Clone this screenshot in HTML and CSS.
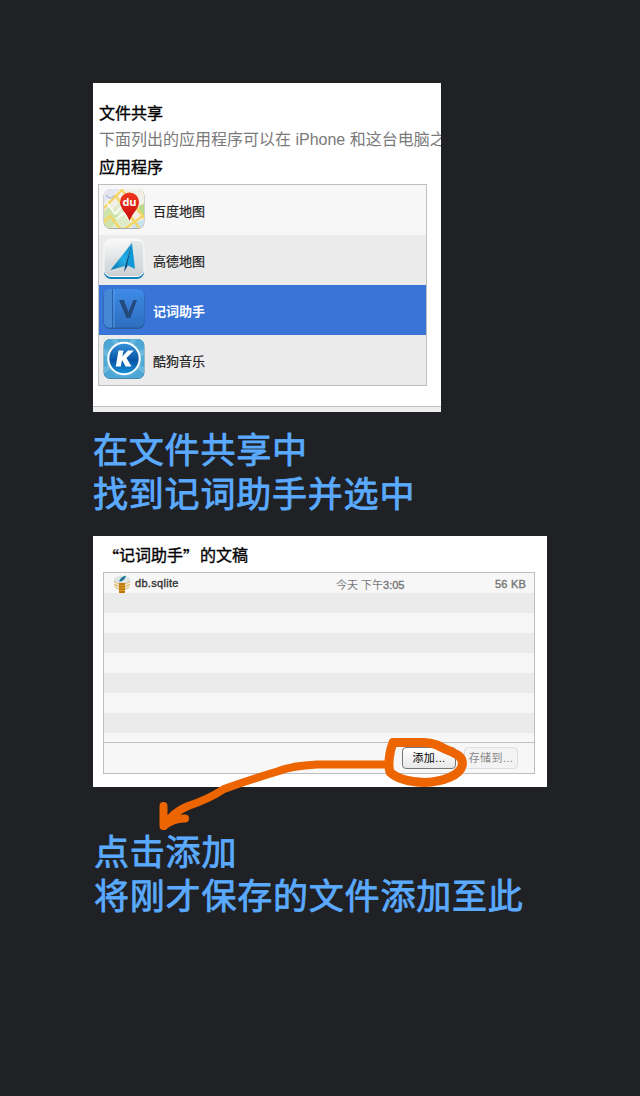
FILE: index.html
```html
<!DOCTYPE html>
<html lang="zh-CN">
<head>
<meta charset="utf-8">
<title>文件共享</title>
<link rel="stylesheet" href="styles.css">
</head>
<body>
<main class="page">
  <section class="panel apps-panel">
    <h2 class="heading">文件共享</h2>
    <p class="description">下面列出的应用程序可以在 iPhone 和这台电脑之</p>
    <h2 class="heading">应用程序</h2>
    <ul class="app-list">
      <li class="app">
        <svg class="app-icon" viewBox="0 0 42 42">
          <defs><clipPath id="r1"><rect x="1" y="1" width="40" height="39" rx="6"/></clipPath>
          <linearGradient id="pin" x2="0" y2="1"><stop stop-color="#f23a20"/><stop offset="1" stop-color="#c40808"/></linearGradient></defs>
          <rect x="0.5" y="1" width="41" height="40" rx="7" fill="#aaa"/>
          <g clip-path="url(#r1)">
            <rect width="42" height="42" fill="#f2f0e6"/>
            <path d="M0 0h17L0 16z" fill="#e3e5f1"/><path d="M1 30L17 14l16 20-9 8H8z" fill="#e0ecc9"/>
            <path d="M0 24l7-6 9 11-8 11H0z" fill="#cfe4aa"/>
            <path d="M30 36l12-5v11H28z" fill="#c8e3ed"/><path d="M36 18l6-3v14l-8-5z" fill="#b9da87"/>
            <path d="M-1 22L19 2l24 30M12 7l25 34M-1 36l8-8 13 16M20 42l20-14" fill="none" stroke="#f5d565" stroke-width="2.4"/>
            <path d="M4 15l8 11 8-9M13 31l8-6 7 9" fill="none" stroke="#fff" stroke-width="1.5"/>
            <path d="M3 7q5 6 8 0" fill="none" stroke="#b2bbd2" stroke-width="1.3"/>
          </g>
          <path d="M26.500 33C24 25 17 21 17 14a9.500 9.500 0 0 1 19 0c0 7-7 11-9.500 19z" fill="url(#pin)"/>
          <text x="26.500" y="18" text-anchor="middle" class="pin-label">du</text>
        </svg>
        <span>百度地图</span>
      </li>
      <li class="app">
        <svg class="app-icon" viewBox="0 0 42 42">
          <defs><linearGradient id="silver" x2="0" y2="1"><stop stop-color="#fafafa"/><stop offset="1" stop-color="#c9d0d2"/></linearGradient>
          <linearGradient id="arrow" x1="1" x2="0" y2="1"><stop stop-color="#0786c7"/><stop offset=".5" stop-color="#25b0e8"/><stop offset="1" stop-color="#0872ad"/></linearGradient></defs>
          <rect x="1" y="3" width="40" height="38" rx="7" fill="#1482bd"/>
          <rect x="1" y="1" width="40" height="37.500" rx="7" fill="url(#silver)" stroke="#f8f8f8"/>
          <path d="M2 24q18 0 25-21h8q5 0 5 6v18L2 35z" fill="#d4dadb" opacity=".55"/>
          <path d="M29 5L7.500 32 22 28z" fill="url(#arrow)"/><path d="M29 5l-7 23-1 6 4-7z" fill="#064e80"/><path d="M29 5l3 26-8-4z" fill="#1099d6"/>
        </svg>
        <span>高德地图</span>
      </li>
      <li class="app selected">
        <svg class="app-icon" viewBox="0 0 42 42">
          <defs><linearGradient id="book" x2="0" y2="1"><stop stop-color="#3e8be6"/><stop offset="1" stop-color="#2d6ebf"/></linearGradient></defs>
          <rect x=".5" y="1.500" width="41" height="39.500" rx="6.500" fill="#285b9c"/>
          <rect x="1" y="1" width="40" height="38.500" rx="6" fill="url(#book)"/>
          <path d="M7 1h2v38.500H7q-6 0-6-6V7q0-6 6-6z" fill="#4688d3"/>
          <path d="M9.500 1v38.500" class="spine"/><path d="M11 1v38.500" stroke="#5ba2ef" stroke-width=".8"/>
          <path d="M16 12h4.800l4.700 12 4.800-12H34L27.300 30h-3.800z" fill="#24497c"/>
        </svg>
        <span>记词助手</span>
      </li>
      <li class="app">
        <svg class="app-icon" viewBox="0 0 42 42">
          <defs><radialGradient id="kbg"><stop stop-color="#a5e0f7"/><stop offset="1" stop-color="#4ca7d4"/></radialGradient>
          <linearGradient id="kdisc" x2="0" y2="1"><stop stop-color="#3995dc"/><stop offset=".55" stop-color="#0754a5"/><stop offset="1" stop-color="#1693da"/></linearGradient></defs>
          <rect x=".5" y="1" width="41" height="40" rx="6.500" fill="#4389ac"/>
          <rect x="1" y="1" width="40" height="39" rx="6" fill="url(#kbg)"/>
          <path d="M21 20L8 1h6zM21 20L1 11v7zM21 20l20-9v7zM21 20L28 1h6zM21 20L1 29v7zM21 20l20 9v7z" fill="#c0e9f7" opacity=".25"/>
          <circle cx="21" cy="20.500" r="15.700" fill="url(#kdisc)" stroke="#fff" stroke-width="2"/>
          <path d="M15.500 12.500h5l-1.200 6 5.700-6h5.800L23.500 20l5 8.500h-5.800L19 22l-1.200 6.500h-5z" fill="#fff"/>
        </svg>
        <span>酷狗音乐</span>
      </li>
    </ul>
    <div class="panel-edge"></div>
  </section>

  <p class="caption">在文件共享中<br>找到记词助手并选中</p>

  <section class="panel docs-panel">
    <h2 class="heading docs-title"><span class="open-quote">“</span>记词助手<span class="close-quote">”</span>的文稿</h2>
    <div class="documents">
      <div class="file-list">
        <div class="file">
          <svg class="file-icon" viewBox="0 0 18 18">
            <path d="M1 4v8q3 3 8 3t8-3V4z" fill="#dcc491"/><ellipse cx="9" cy="4.500" rx="8" ry="3.800" fill="#dfe5e7"/>
            <path d="M1 8q8 4 16 0M1 11q8 4 16 0" fill="none" stroke="#fff6df" stroke-width="1"/>
            <path d="M6 8h6v10H6z" fill="#bd780c"/><path d="M6 10.500h6M6 13h6M6 15.500h6" stroke="#e3ac3b" stroke-width=".8"/>
            <path d="M6 6.500q1-4.500 7-6-1 4.500-5 6z" fill="#237895"/>
          </svg>
          <span class="file-name">db.sqlite</span>
          <span class="file-date">今天 下午<b>3:05</b></span>
          <span class="file-size">56 KB</span>
        </div>
      </div>
      <div class="toolbar">
        <button class="button">添加...</button>
        <button class="button" disabled>存储到...</button>
      </div>
    </div>
  </section>

  <p class="caption caption-last">点击添加<br>将刚才保存的文件添加至此</p>

  <svg class="annotation" viewBox="0 0 640 1096">
    <path class="ring" d="M393 743C389 752 388 766 390 772C397 779 412 782 425 782.500C443 782 460 775 462 766C465 754 451 753 437 745Q429 742 422 742.500H393"/>
    <path d="M389 764.500H317Q291 766 279 771Q252 779 224 789Q207 800 188 806Q173 812 164 826M163.500 806V826Q174 818 185 818.500"/>
  </svg>
</main>
</body>
</html>
```
FILE: styles.css
```css
* { box-sizing: border-box; }
body {
  margin: 0;
  background: #202124;
  font-family: "Liberation Sans", "Noto Sans CJK SC", sans-serif;
}
.page {
  position: relative;
  height: 1096px;
  padding: 83px 93px 0;
  overflow: hidden;
}
.panel {
  display: flex;
  flex-direction: column;
  background: #fff;
  overflow: hidden;
}
.apps-panel { width: 348px; height: 329px; padding-top: 19px; }
.heading {
  margin: 0 0 0 6px;
  font-size: 16px;
  line-height: 24px;
  font-weight: 400;
  color: #000;
  -webkit-text-stroke: 0.35px #000;
}
.description {
  margin: 2px 0 4px 6px;
  font-size: 16px;
  line-height: 24px;
  color: #7a7a7a;
  white-space: nowrap;
}
.app-list {
  width: 329px;
  margin: 4px 0 0 5px;
  padding: 0;
  list-style: none;
  border: 1px solid #bebebe;
}
.app {
  display: flex;
  align-items: center;
  gap: 8px;
  height: 50px;
  padding: 0 4px 2px;
  font-size: 13px;
  color: #222;
  background: #ebebeb;
  -webkit-text-stroke: 0.2px currentColor;
}
.app:first-child { background: #f7f7f7; }
.app.selected { background: #3875d7; color: #fff; font-weight: 700; -webkit-text-stroke: 0; }
.app span { padding-top: 3px; }
.app-icon { width: 42px; height: 42px; -webkit-text-stroke: 0; }
.pin-label { fill: #fff; font: 700 11px "Open Sans", sans-serif; }
.spine { stroke: #285fa8; }
.panel-edge { margin-top: auto; height: 6px; background: #ededed; border-top: 1px solid #bdbdbd; }
.caption {
  margin: 17px -20px 0 0;
  font-size: 35px;
  letter-spacing: 0.8px;
  line-height: 44px;
  color: #5aaaff;
  -webkit-text-stroke: 0.8px #5aaaff;
}
.docs-panel { width: 454px; height: 251px; margin-top: 19px; }
.docs-title { margin: 8px 0 0 9px; height: 28px; display: flex; }
.open-quote { width: 17px; text-align: right; }
.close-quote { width: 17px; }
.open-quote, .close-quote { font-family: "Noto Sans CJK SC", sans-serif; }
.documents {
  width: 432px;
  height: 202px;
  margin-left: 10px;
  border: 1px solid #bebebe;
  display: flex;
  flex-direction: column;
}
.file-list {
  flex: 1;
  background: repeating-linear-gradient(#f7f7f7 0 20px, #ebebeb 20px 40px);
}
.file {
  display: flex;
  align-items: center;
  height: 20px;
  padding: 0 8px 0 9px;
  font-size: 11px;
  color: #777;
}
.file-icon { width: 18px; height: 18px; margin-top: 2px; }
.file-name { width: 201px; margin-left: 4px; color: #333; letter-spacing: 0.3px; -webkit-text-stroke: 0.35px #333; }
.file-date { padding-top: 1px; }
.file-date b { font-weight: 400; -webkit-text-stroke: 0.4px #777; }
.file-size { margin-left: auto; padding-top: 2px; letter-spacing: 0.2px; -webkit-text-stroke: 0.4px #777; }
.toolbar {
  display: flex;
  justify-content: flex-end;
  gap: 8px;
  height: 31px;
  padding: 4px 16px;
  background: #f7f7f7;
  border-top: 1px solid #bebebe;
}
.button {
  width: 54px;
  height: 22px;
  padding: 0;
  font: 11px/18px "Liberation Sans", "Noto Sans CJK SC", sans-serif;
  letter-spacing: 0.4px;
  white-space: nowrap;
  color: #000;
  border: 1px solid #777;
  border-radius: 4px;
  background: linear-gradient(#fff, #e8e8e8);
}
.button:disabled { color: #888; border-color: #dedede; background: #f3f3f3; }
.caption-last { margin-top: 44px; margin-left: 1px; }
.annotation {
  position: absolute;
  inset: 0;
  width: 640px;
  height: 1096px;
  fill: none;
  stroke: #ed6500;
  stroke-width: 8px;
  stroke-linecap: round;
  stroke-linejoin: round;
  filter: blur(0.7px);
  pointer-events: none;
}
.ring { stroke-width: 9px; }
```
